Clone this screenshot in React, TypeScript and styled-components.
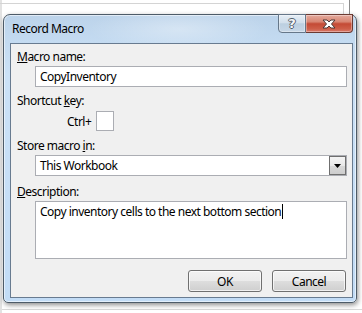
import React from 'react';
import styled, { createGlobalStyle } from 'styled-components';

const GlobalStyle = createGlobalStyle`
  html, body {
    margin: 0;
    height: 100%;
  }
  body {
    font-family: 'Segoe UI', 'Noto Sans', sans-serif;
    font-size: 12px;
    letter-spacing: -0.5px;
    color: #000000;
    background-color: #ffffff;
    background-image:
      linear-gradient(#d4d4d4, #d4d4d4),
      linear-gradient(#d4d4d4, #d4d4d4),
      linear-gradient(#8c8c8c, #8c8c8c),
      linear-gradient(#e2e2e2, #e2e2e2),
      linear-gradient(#d9d9d9, #d9d9d9);
    background-position: 0 3px, 343px 3px, 349px 0, 0 0, 0 309px;
    background-size: 343px 1px, 1px 12px, 1px 14px, 2px 313px, 362px 1px;
    background-repeat: no-repeat;
  }
`;

const Page = styled.div`
  padding: 14px 0 0 3px;
`;

const Window = styled.div`
  box-sizing: border-box;
  width: 354px;
  height: 289px;
  display: flex;
  flex-direction: column;
  border: 1px solid #4d5b68;
  border-radius: 7px 7px 5px 5px;
  background:
    radial-gradient(ellipse 90px 22px at 175px 14px, rgba(255, 255, 255, 0.35), transparent),
    linear-gradient(180deg, #bcd3ea 0px, #c4dbf1 28px, #cbe1f6 60px, #c2dcf6 100%);
  box-shadow: 1px 2px 5px rgba(0, 0, 0, 0.45), inset 0 0 0 1px rgba(255, 255, 255, 0.55);
`;

const TitleBar = styled.div`
  height: 28px;
  display: flex;
  padding: 0 3px 0 8px;
`;

const Title = styled.div`
  flex: 1;
  align-self: center;
  line-height: 16px;
`;

const CaptionButton = styled.div<{ $close?: boolean }>`
  box-sizing: border-box;
  width: ${p => (p.$close ? 47 : 28)}px;
  height: 19px;
  margin-top: -1px;
  display: flex;
  align-items: center;
  justify-content: center;
  border: 1px solid ${p => (p.$close ? '#6b3a32' : '#667789')};
  border-left-width: ${p => (p.$close ? 0 : 1)}px;
  border-radius: ${p => (p.$close ? '0 0 4px 0' : '0 0 0 4px')};
  background: ${p =>
    p.$close
      ? 'linear-gradient(180deg, #e4ab9e 0%, #d88572 40%, #c44a35 52%, #cd5d47 80%, #d9786a 100%)'
      : 'linear-gradient(180deg, #e6eef6 0%, #d2dfeb 45%, #bccfe0 52%, #c7d7e7 100%)'};
  box-shadow: inset 0 0 0 1px rgba(255, 255, 255, 0.35);
`;

const HelpGlyph = styled.span`
  font-family: 'DejaVu Sans', sans-serif;
  font-weight: bold;
  font-size: 13px;
  line-height: 13px;
  letter-spacing: 0;
  color: #f4f6f8;
  text-shadow: 1px 0 0 #55606b, -1px 0 0 #55606b, 0 1px 0 #55606b, 0 -1px 0 #55606b;
`;

const Client = styled.div`
  flex: 1;
  margin: 0 3px 4px 6px;
  padding: 5px 5px 5px 6px;
  display: flex;
  flex-direction: column;
  border: 1px solid #687b90;
  background: #f0f0f0;
`;

const Label = styled.div<{ $gap: number }>`
  line-height: 16px;
  margin-top: ${p => p.$gap}px;
  white-space: nowrap;
`;

const TextBox = styled.div<{ $gap: number; $height: number }>`
  box-sizing: border-box;
  width: 312px;
  height: ${p => p.$height}px;
  margin: ${p => p.$gap}px 0 0 18px;
  padding: 0 4px;
  border: 1px solid #abadb3;
  background: #ffffff;
  line-height: 19px;
  white-space: nowrap;
`;

const Description = styled(TextBox)`
  padding-top: 2px;
  line-height: 16px;
`;

const Caret = styled.span`
  display: inline-block;
  width: 1px;
  height: 15px;
  margin-left: 1px;
  vertical-align: -3px;
  background: #000000;
`;

const ShortcutRow = styled.div`
  display: flex;
  align-items: center;
  height: 20px;
  margin: 2px 0 0 50px;
`;

const CtrlText = styled.span`
  width: 29px;
  white-space: nowrap;
`;

const KeyBox = styled.div`
  box-sizing: border-box;
  width: 18px;
  height: 20px;
  border: 1px solid #abadb3;
  background: #ffffff;
`;

const Select = styled.div`
  box-sizing: border-box;
  width: 312px;
  height: 21px;
  margin: 1px 0 0 18px;
  display: flex;
  border: 1px solid #abadb3;
  background: #ffffff;
`;

const SelectText = styled.div`
  flex: 1;
  padding-left: 4px;
  line-height: 19px;
`;

const DropButton = styled.div`
  box-sizing: border-box;
  width: 17px;
  height: 19px;
  display: flex;
  align-items: center;
  justify-content: center;
  border: 1px solid #6f6f6f;
  background: linear-gradient(180deg, #f4f4f4 0%, #e8e8e8 50%, #d9d9d9 51%, #cdcdcd 100%);
`;

const ButtonRow = styled.div`
  display: flex;
  justify-content: flex-end;
  gap: 10px;
  margin-top: 11px;
  padding-right: 1px;
`;

const Button = styled.div`
  box-sizing: border-box;
  width: 74px;
  height: 22px;
  display: flex;
  align-items: center;
  justify-content: center;
  border: 1px solid #707070;
  border-radius: 3px;
  background: linear-gradient(180deg, #f2f2f2 0%, #ebebeb 50%, #dddddd 51%, #cfcfcf 100%);
  box-shadow: inset 0 0 0 1px rgba(255, 255, 255, 0.7);
`;

export default function App() {
  return (
    <>
      <GlobalStyle />
      <Page>
        <Window>
          <TitleBar>
            <Title>Record Macro</Title>
            <CaptionButton>
              <HelpGlyph>?</HelpGlyph>
            </CaptionButton>
            <CaptionButton $close>
              <svg width="14" height="10" viewBox="0 0 14 10">
                <path
                  d="M1 1 H5 L7 3 L9 1 H13 L9.5 5 L13 9 H9 L7 7 L5 9 H1 L4.5 5 Z"
                  fill="#ffffff"
                  stroke="#4a3a38"
                  strokeWidth="1"
                  strokeLinejoin="round"
                />
              </svg>
            </CaptionButton>
          </TitleBar>
          <Client>
            <Label $gap={0}>
              <u>M</u>acro name:
            </Label>
            <TextBox $gap={1} $height={21}>CopyInventory</TextBox>
            <Label $gap={6}>
              Shortcut <u>k</u>ey:
            </Label>
            <ShortcutRow>
              <CtrlText>Ctrl+</CtrlText>
              <KeyBox />
            </ShortcutRow>
            <Label $gap={7}>
              Store macro <u>i</u>n:
            </Label>
            <Select>
              <SelectText>This Workbook</SelectText>
              <DropButton>
                <svg width="7" height="4" viewBox="0 0 7 4">
                  <path d="M0 0 H7 L3.5 4 Z" fill="#000000" />
                </svg>
              </DropButton>
            </Select>
            <Label $gap={8}>
              <u>D</u>escription:
            </Label>
            <Description $gap={1} $height={58}>
              Copy inventory cells to the next bottom section
              <Caret />
            </Description>
            <ButtonRow>
              <Button>OK</Button>
              <Button>Cancel</Button>
            </ButtonRow>
          </Client>
        </Window>
      </Page>
    </>
  );
}
